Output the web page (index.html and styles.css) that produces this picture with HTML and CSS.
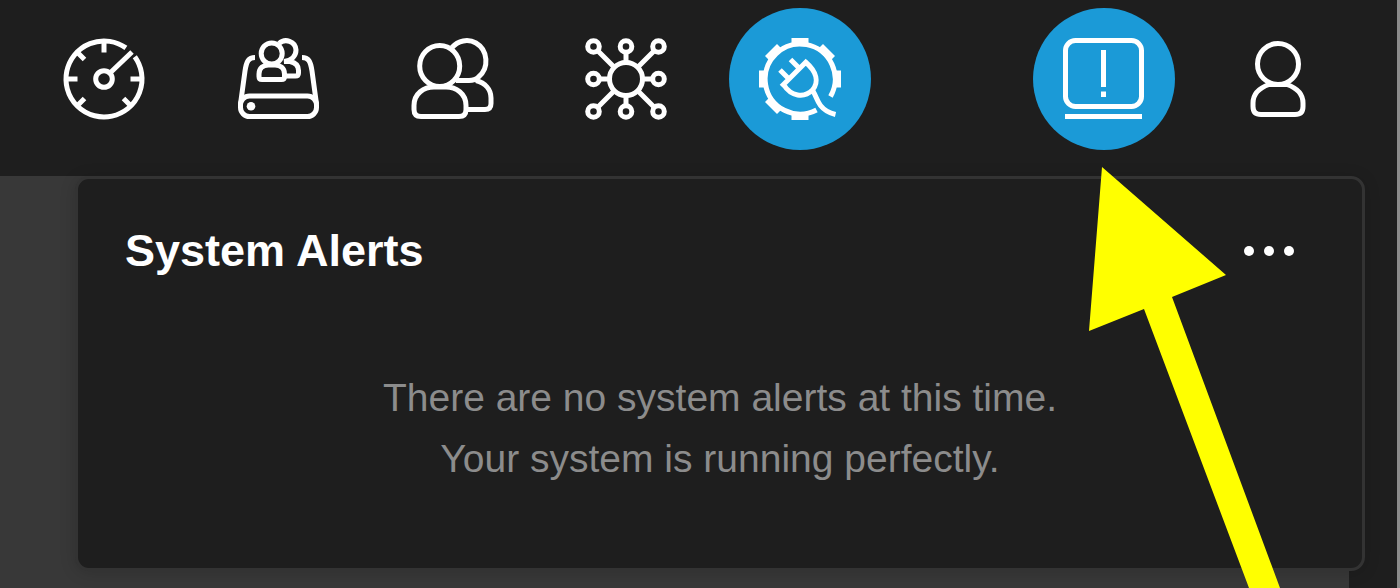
FILE: index.html
```
<!DOCTYPE html>
<html lang="en">
<head>
    <meta charset="UTF-8">
    <meta name="viewport" content="width=device-width, initial-scale=1.0">
    <title>System Alerts</title>
    <link rel="stylesheet" href="styles.css">
</head>
<body>
    <header class="topbar">
        <nav class="nav" aria-label="Main">
            <button class="nav-btn" type="button" aria-label="Dashboard">
                <svg class="icon" viewBox="0 0 84 84">
                    <path d="M72.8 19.7A38 38 0 1 1 63.9 10.9"/>
                    <circle cx="42" cy="42" r="8.3"/>
                    <path d="M48 36L70 15M42 4v11.500M4 42h11.500M80 42H68.500M15 15l7.500 7.500M15 69l7.500-7.500M69 69l-7.500-7.500"/>
                </svg>
            </button>
            <button class="nav-btn" type="button" aria-label="Shared storage">
                <svg class="icon" viewBox="0 0 84 84">
                    <rect x="4.500" y="59" width="76" height="20.500" rx="9"/>
                    <path d="M4.500 67L9 34C10.500 24 12.500 20.500 19 20.500M80.500 67L76 34C74.500 24 72.500 20.500 66 20.500"/>
                    <circle class="solid" cx="15" cy="69.300" r="4.300"/>
                    <circle cx="35.700" cy="16.500" r="10.500"/>
                    <path d="M26 42.500h19.500q3 0 3-3v-2.500c0-6-4.500-9-9.500-9h-6.500c-5 0-9.500 3-9.500 9v2.500q0 3 3 3z"/>
                    <path d="M43 6.500C49 1 59.500 4 60 13C60 18.500 56 23.500 48 24.500H54C59 25.500 62.500 28.500 62.500 33.500V36q0 3-3 3H49"/>
                </svg>
            </button>
            <button class="nav-btn" type="button" aria-label="Users">
                <svg class="icon" viewBox="0 0 84 84">
                    <ellipse cx="29.700" cy="29" rx="20" ry="20.500"/>
                    <path d="M11 79.500h38q7 0 7-7v-4c0-12-10-18.500-20-18.500H24C14 50 4 56.500 4 68.500v4q0 7 7 7z"/>
                    <path d="M42 10.500C48 3.500 58 1.500 66 6C78 13 79.500 31 68.500 40C66 42.500 63 43.500 59 43.500H46M66 43.500C75 46 81 52 81 61v5.500q0 6-6 6H57"/>
                </svg>
            </button>
            <button class="nav-btn" type="button" aria-label="Network">
                <svg class="icon" viewBox="0 0 84 84">
                    <circle cx="42" cy="42" r="16.500"/>
                    <g>
                        <circle cx="9.500" cy="9.500" r="5.800"/>
                        <circle cx="42" cy="9.500" r="5.800"/>
                        <circle cx="74.500" cy="9.500" r="5.800"/>
                        <circle cx="9.500" cy="42" r="5.800"/>
                        <circle cx="74.500" cy="42" r="5.800"/>
                        <circle cx="9.500" cy="74.500" r="5.800"/>
                        <circle cx="42" cy="74.500" r="5.800"/>
                        <circle cx="74.500" cy="74.500" r="5.800"/>
                    </g>
                    <path d="M14 14L30 30M70 14L54 30M14 70L30 54M70 70L54 54M42 16v9M42 59v9M16 42h9M59 42h9"/>
                </svg>
            </button>
            <button class="nav-btn active" type="button" aria-label="Integrations">
                <svg class="icon" viewBox="0 0 84 84">
                    <path d="M58.500 73A35 35 0 1 1 72.500 59.500"/>
                    <g class="solid">
                        <rect id="tooth" x="33.500" y="1" width="17" height="8"/>
                        <use href="#tooth" transform="rotate(45 42 42)"/>
                        <use href="#tooth" transform="rotate(90 42 42)"/>
                        <use href="#tooth" transform="rotate(180 42 42)"/>
                        <use href="#tooth" transform="rotate(225 42 42)"/>
                        <use href="#tooth" transform="rotate(270 42 42)"/>
                        <use href="#tooth" transform="rotate(315 42 42)"/>
                    </g>
                    <path d="M47.500 25C59 35 61 45 54.500 53C46 61.500 33 59.500 25.500 47.500M23.500 49.500L49.500 23.500M22 33l9 9M32.500 22.500l9 9"/>
                    <path d="M55 54C58 59 59 64 62.500 68.500C66 73 71 76 77.500 77.500"/>
                </svg>
            </button>
        </nav>
        <div class="nav">
            <button class="nav-btn active" type="button" aria-label="System alerts" aria-expanded="true">
                <svg class="icon" viewBox="0 0 84 84">
                    <rect x="3.500" y="3.500" width="76" height="66" rx="10"/>
                    <path d="M41.500 13v37M41.500 54.500v5.500M3 79.500h77"/>
                </svg>
            </button>
            <button class="nav-btn" type="button" aria-label="Account">
                <svg class="icon" viewBox="0 0 84 84">
                    <circle cx="42" cy="27" r="20.500"/>
                    <path d="M25 77.500h34q8 0 8-8v-3.500C67 55 58 50 51 47.500H33C26 50 17 55 17 66V69.500q0 8 8 8z"/>
                </svg>
            </button>
        </div>
    </header>

    <main class="page">
        <div class="content"></div>
        <section class="alerts">
            <div class="alerts-head">
                <h1>System Alerts</h1>
                <button class="more" type="button" aria-label="More options">
                    <span class="dot"></span>
                    <span class="dot"></span>
                    <span class="dot"></span>
                </button>
            </div>
            <p>There are no system alerts at this time.<br>Your system is running perfectly.</p>
        </section>
    </main>

    <!-- pointer to the alerts button -->
    <svg class="pointer" width="192" height="421" viewBox="0 0 192 421" aria-hidden="true">
        <path d="M13 0L137 108L83 130L191 421H160L55 142L0 164z"/>
    </svg>
</body>
</html>
```
FILE: styles.css
```
* {
    box-sizing: border-box;
}
body {
    position: relative;
    display: flex;
    flex-direction: column;
    min-height: 100vh;
    margin: 0;
    overflow-x: hidden;
    background-color: #1e1e1e;
    border-right: 3px solid #8c8c8c;
    font-family: "Liberation Sans", Arial, sans-serif;
}
button {
    padding: 0;
    border: none;
    background: none;
    color: white;
    cursor: pointer;
}

/* top bar */
.topbar {
    display: flex;
    justify-content: space-between;
    padding: 8px 48px 26px 33px;
}
.nav {
    display: flex;
    gap: 32px;
}
.nav-btn {
    display: flex;
    align-items: center;
    justify-content: center;
    width: 142px;
    height: 142px;
    border-radius: 50%;
}
.nav-btn.active {
    background-color: #1b9ad7;
}
.icon {
    width: 84px;
    height: 84px;
    fill: none;
    stroke: white;
    stroke-width: 5;
}
.icon .solid {
    fill: white;
    stroke: none;
}

/* page */
.page {
    position: relative;
    display: flex;
    flex: 1;
    padding-right: 48px;
}
.content {
    flex: 1;
    background-color: #383838;
}

/* alerts popover */
.alerts {
    position: absolute;
    top: 0;
    left: 75px;
    right: 32px;
    padding: 48px 47px 79px;
    border: 3px solid #333;
    border-radius: 14px;
    background-color: #1e1e1e;
    box-shadow: 0 2px 16px rgba(0, 0, 0, 0.15);
}
.alerts-head {
    display: flex;
    align-items: center;
    justify-content: space-between;
    margin-bottom: 92px;
}
.alerts h1 {
    margin: 0;
    color: white;
    font-size: 45px;
    line-height: 48px;
}
.alerts p {
    margin: 0;
    color: #8c8c8c;
    font-size: 39px;
    line-height: 61px;
    text-align: center;
}
.more {
    display: flex;
    align-items: center;
    justify-content: center;
    gap: 10px;
    width: 92px;
    height: 48px;
}
.dot {
    width: 10px;
    height: 10px;
    border-radius: 50%;
    background-color: white;
}

.pointer {
    position: absolute;
    top: 167px;
    right: 116px;
    fill: #ffff00;
    pointer-events: none;
}
```
